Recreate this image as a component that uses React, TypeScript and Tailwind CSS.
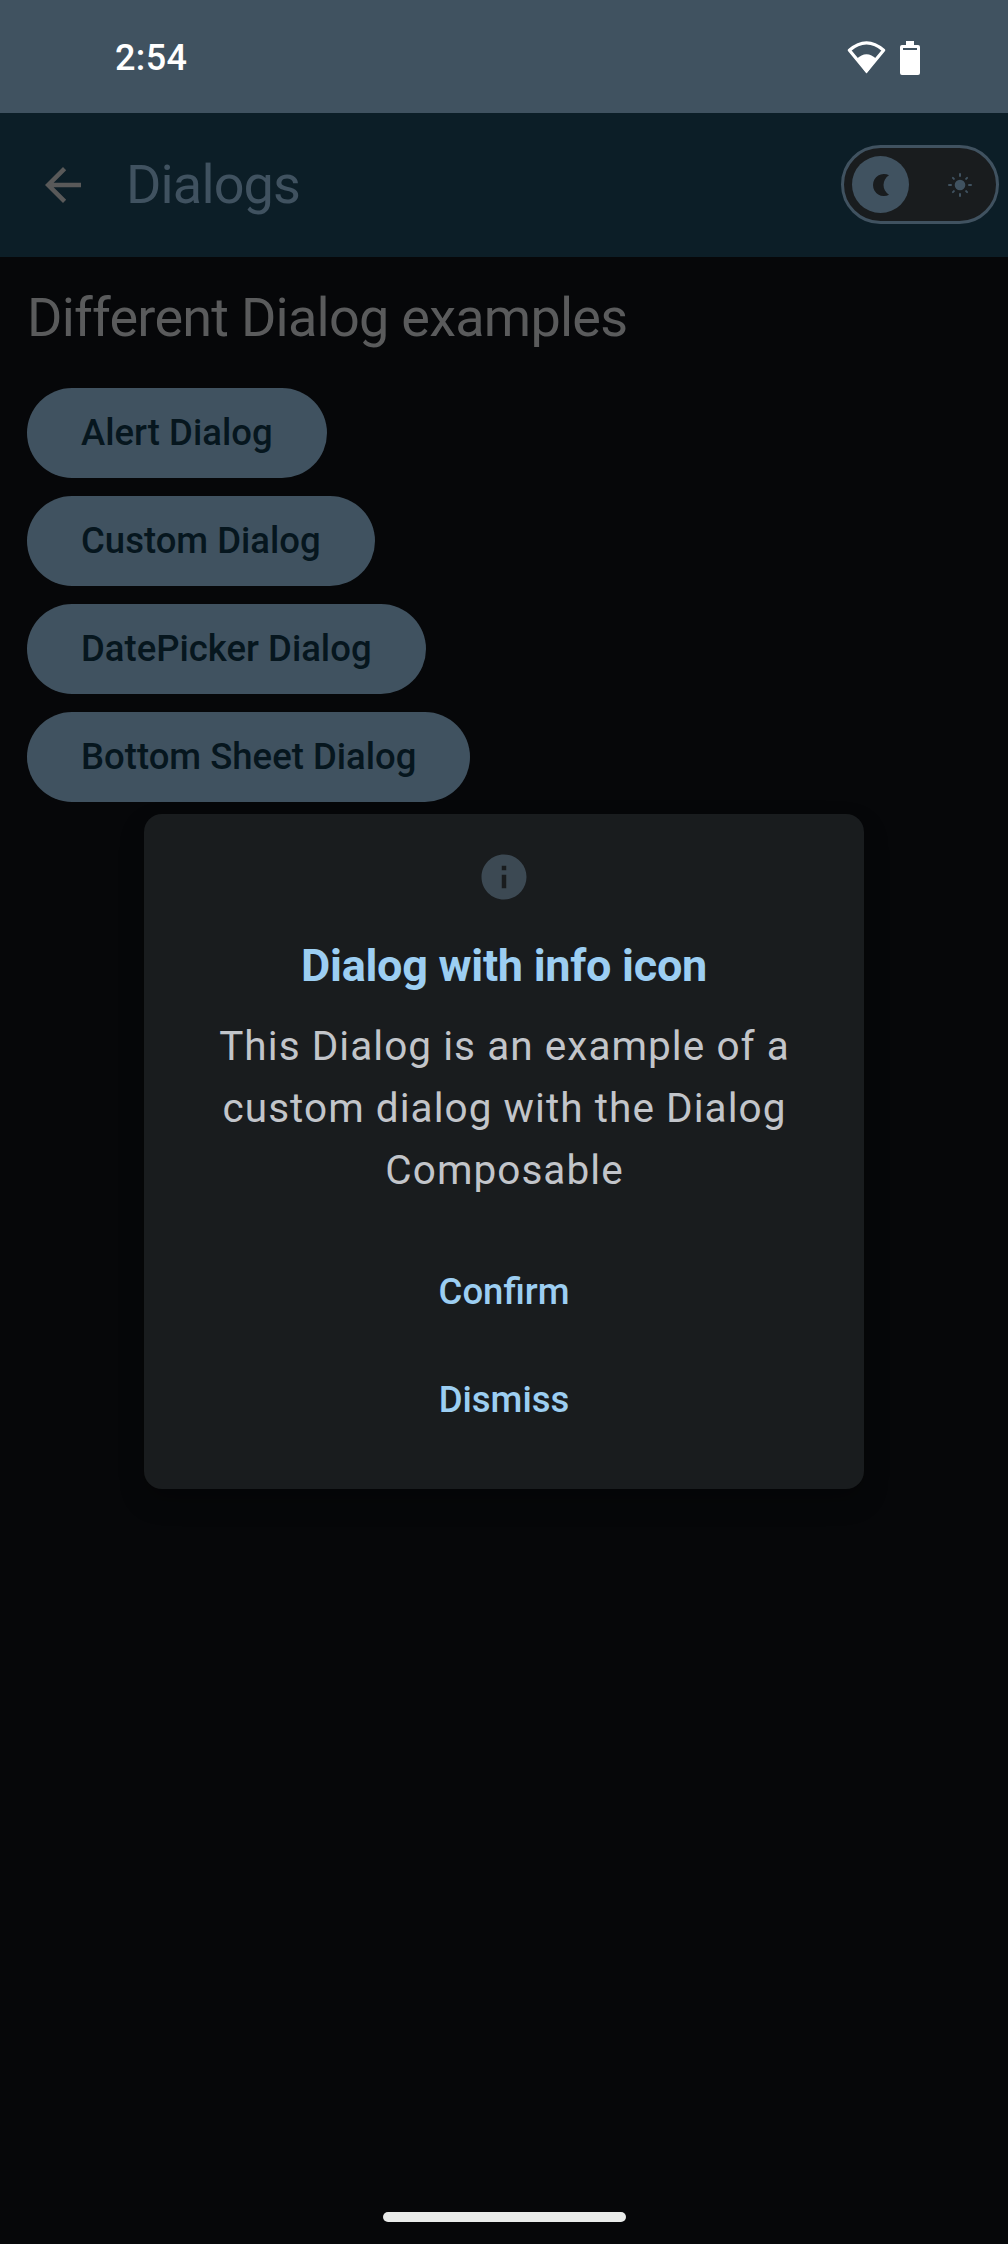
const dialogButtons = ["Alert Dialog", "Custom Dialog", "DatePicker Dialog", "Bottom Sheet Dialog"];

function StatusBar() {
  return (
    <header className="flex h-[113px] items-center justify-between bg-[#405260] pl-[115px] pr-[88px] pt-[2px] text-white">
      <span className="text-[36px] font-medium tracking-[0.4px]">2:54</span>
      <div className="flex items-center gap-[14px]">
        <svg width="39" height="33" viewBox="0 0 39 33" fill="none">
          <path
            d="M2.400 9.200Q19.500 -5.500 36.600 9.200L19.500 30Z"
            stroke="white"
            strokeWidth="3.200"
            strokeLinejoin="round"
          />
          <path d="M9.500 18Q19.500 8.500 29.500 18L19.500 32.500Z" fill="white" />
        </svg>
        <svg width="20" height="34" viewBox="0 0 20 34">
          <path
            fill="white"
            fillRule="evenodd"
            d="M6 0H14V4H18Q20 4 20 6V32Q20 34 18 34H2Q0 34 0 32V6Q0 4 2 4H6ZM3 7V9H17V7Z"
          />
        </svg>
      </div>
    </header>
  );
}

function ThemeToggle() {
  return (
    <div className="mb-px flex h-[79px] w-[158px] items-center justify-between rounded-full border-[3px] border-[#405260] bg-[#191c1e] pl-2 pr-[24px]">
      <span className="flex size-[57px] items-center justify-center rounded-full bg-[#405260]">
        <svg width="17" height="22" viewBox="0 0 17 22">
          <path d="M17 1.200A11 11 0 1 0 17 20.800A11.500 11.500 0 0 1 17 1.200Z" fill="#191c1e" />
        </svg>
      </span>
      <svg width="24" height="24" viewBox="0 0 24 24" stroke="#405260" strokeWidth="2" strokeLinecap="round">
        <circle cx="12" cy="12" r="5.300" fill="#405260" stroke="none" />
        <path d="M12 1v2M12 21v2M1 12h2M21 12h2M4.900 4.900l1 1M18.100 18.100l1 1M4.900 19.100l1-1M18.100 5.900l1-1" />
      </svg>
    </div>
  );
}

function AppBar() {
  return (
    <div className="flex h-36 items-center bg-[#0c1e27] pl-9 pr-[9px]">
      <svg width="54" height="54" viewBox="0 0 24 24" fill="#595959">
        <path d="M20 11H7.830l5.590-5.590L12 4l-8 8 8 8 1.410-1.410L7.830 13H20v-2z" />
      </svg>
      <h1 className="ml-9 flex-1 text-[54px] leading-none tracking-[-0.85px] text-[#405260]">Dialogs</h1>
      <ThemeToggle />
    </div>
  );
}

function InfoDialog() {
  return (
    <section
      role="dialog"
      className="absolute left-1/2 top-[814px] flex h-[675px] w-[720px] -translate-x-1/2 flex-col items-center rounded-[18px] bg-[#191c1e] pt-9 text-center shadow-[0_12px_24px_rgba(0,0,0,0.25)]"
    >
      <svg width="54" height="54" viewBox="0 0 24 24" fill="#3c4953">
        <path d="M12 2C6.480 2 2 6.480 2 12s4.480 10 10 10 10-4.480 10-10S17.520 2 12 2zm1 15h-2v-6h2v6zm0-8h-2V7h2v2z" />
      </svg>
      <h3 className="mt-[30px] text-[45px] font-bold leading-[63px] tracking-[-0.28px] text-[#9ccef2]">
        Dialog with info icon
      </h3>
      <p className="mt-[18px] w-[600px] pl-px text-[40.5px] leading-[62px] tracking-[1.05px] text-[#c2c5ca]">
        This Dialog is an example of a custom dialog with the Dialog Composable
      </p>
      <div className="mt-[46px] flex flex-col gap-[18px] text-[36.5px] font-medium text-[#9ccef2]">
        <button className="h-[90px] px-[27px]">Confirm</button>
        <button className="h-[90px] px-[27px]">Dismiss</button>
      </div>
    </section>
  );
}

export default function App() {
  return (
    <div className="relative flex h-[2244px] w-[1008px] flex-col overflow-hidden bg-[#060709] font-[Roboto,sans-serif]">
      <StatusBar />
      <AppBar />
      <main className="flex flex-1 flex-col items-start px-[27px] pt-[27px]">
        <h2 className="text-[54px] leading-[68px] tracking-[-0.75px] text-[#5a5b5c]">Different Dialog examples</h2>
        <div className="mt-9 flex flex-col items-start gap-[18px]">
          {dialogButtons.map((label) => (
            <button
              key={label}
              className="h-[90px] rounded-full bg-[#405260] px-[54px] text-[36.500px] font-medium text-[#06161e]"
            >
              {label}
            </button>
          ))}
        </div>
      </main>
      <div className="mb-[22px] h-[10px] w-[243px] self-center rounded-full bg-[#e9ebea]" />
      <InfoDialog />
    </div>
  );
}
